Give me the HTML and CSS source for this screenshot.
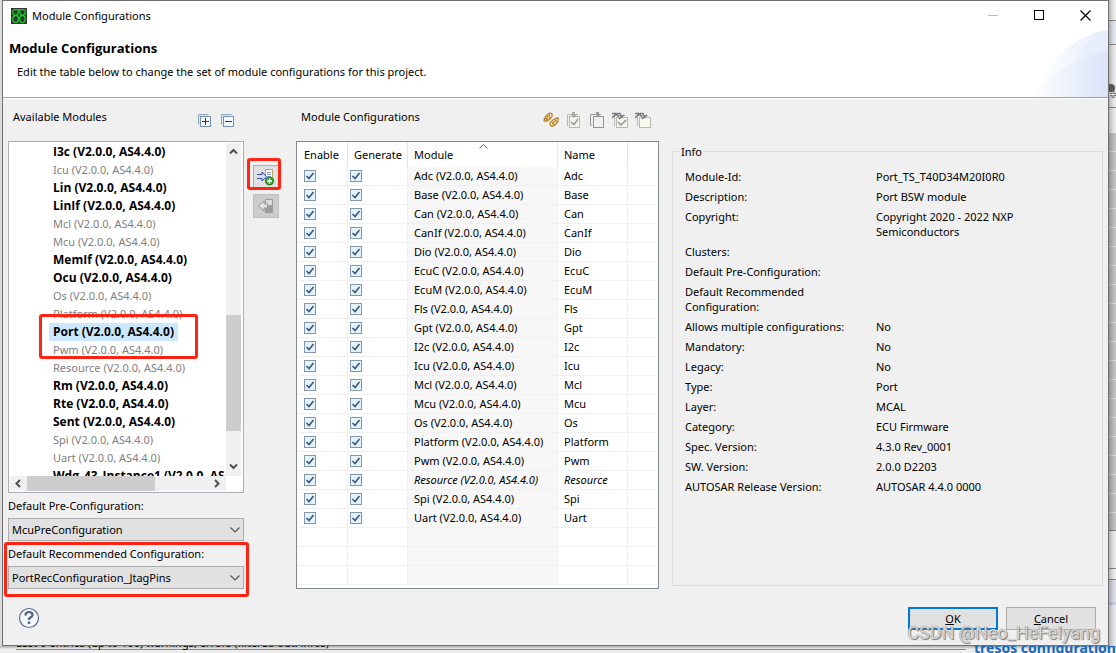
FILE: index.html
```html
<!DOCTYPE html>
<html lang="en">
<head>
<meta charset="utf-8">
<title>Module Configurations</title>
<link rel="stylesheet" href="styles.css">
</head>
<body>
<div class="edge edge-left"></div>
<main class="dialog">
  <header class="banner">
    <svg class="swoosh" width="78" height="67" viewBox="0 0 78 67" aria-hidden="true">
      <defs>
        <linearGradient id="g1" x1="0" x2="1"><stop offset="0" stop-color="#fff"/><stop offset="1" stop-color="#e6eefb"/></linearGradient>
        <linearGradient id="g2" x1="0" x2="1"><stop offset="0" stop-color="#fdfeff"/><stop offset="1" stop-color="#dbe3f8"/></linearGradient>
      </defs>
      <path d="M4 67C18 32 45 4 78 0V67Z" fill="url(#g1)"/>
      <path d="M44 33C52 16 64 4 78 0V67H44Z" fill="#e4edfb" opacity=".6"/>
      <path d="M4 67C20 44 48 26 78 21V67Z" fill="url(#g2)"/>
    </svg>
    <div class="titlebar">
      <svg width="16" height="16" viewBox="0 0 16 16" aria-hidden="true"><rect width="16" height="16" fill="#343434"/><path d="M7.300 4V1.700H4Q1.700 1.700 1.700 4.300T4.500 7.300Q1.700 8 1.700 11T4 14.300H5Q7.300 14.300 7.300 12V10Q7.300 7.500 4.500 7.300Q7.300 7 7.300 4ZM8.700 4V1.700H12Q14.300 1.700 14.300 4.300T11.500 7.300Q14.300 8 14.300 11T12 14.300H11Q8.700 14.300 8.700 12V10Q8.700 7.500 11.500 7.300Q8.700 7 8.700 4Z" fill="none" stroke="#10d820" stroke-width="1.200"/></svg>
      <span class="window-title">Module Configurations</span>
      <button class="win" aria-label="Minimize"><svg width="11" height="11"><path d="M0 5.500H10" stroke="#bbb"/></svg></button>
      <button class="win" aria-label="Maximize"><svg width="11" height="11"><rect x=".5" y=".5" width="9" height="9" fill="none" stroke="#000"/></svg></button>
      <button class="win" aria-label="Close"><svg width="11" height="11"><path d="M.5 .5L10.500 10.500M10.500 .5L.5 10.500" stroke="#000" stroke-width="1.200"/></svg></button>
    </div>
    <h1>Module Configurations</h1>
    <p>Edit the table below to change the set of module configurations for this project.</p>
  </header>

  <div class="content">
    <section class="available">
      <div class="bar">
        <h2>Available Modules</h2>
        <button class="tool" aria-label="Expand all"><svg width="14" height="14"><path d="M.5 10.500V.5H10.500" fill="none" stroke="#8fa9c4"/><path d="M1 10V1H10V3H3V10Z" fill="#d5e8f5"/><rect x="2.500" y="2.500" width="10" height="10" fill="#f4fbff" stroke="#7891b0"/><path d="M4 7.500H11M7.500 4V11" stroke="#08457c"/></svg></button>
        <button class="tool" aria-label="Collapse all"><svg width="14" height="14"><path d="M.5 10.500V.5H10.500" fill="none" stroke="#8fa9c4"/><path d="M1 10V1H10V3H3V10Z" fill="#d5e8f5"/><rect x="2.500" y="2.500" width="10" height="10" fill="#f4fbff" stroke="#7891b0"/><path d="M4 7.500H11" stroke="#08457c"/></svg></button>
      </div>
      <div class="tree">
        <ul>
          <li><span>I3c (V2.0.0, AS4.4.0)</span></li>
          <li class="used"><span>Icu (V2.0.0, AS4.4.0)</span></li>
          <li><span>Lin (V2.0.0, AS4.4.0)</span></li>
          <li><span>LinIf (V2.0.0, AS4.4.0)</span></li>
          <li class="used"><span>Mcl (V2.0.0, AS4.4.0)</span></li>
          <li class="used"><span>Mcu (V2.0.0, AS4.4.0)</span></li>
          <li><span>MemIf (V2.0.0, AS4.4.0)</span></li>
          <li><span>Ocu (V2.0.0, AS4.4.0)</span></li>
          <li class="used"><span>Os (V2.0.0, AS4.4.0)</span></li>
          <li class="used"><span>Platform (V2.0.0, AS4.4.0)</span></li>
          <li class="selected"><span>Port (V2.0.0, AS4.4.0)</span><i class="mark mark-port"></i></li>
          <li class="used"><span>Pwm (V2.0.0, AS4.4.0)</span></li>
          <li class="used"><span>Resource (V2.0.0, AS4.4.0)</span></li>
          <li><span>Rm (V2.0.0, AS4.4.0)</span></li>
          <li><span>Rte (V2.0.0, AS4.4.0)</span></li>
          <li><span>Sent (V2.0.0, AS4.4.0)</span></li>
          <li class="used"><span>Spi (V2.0.0, AS4.4.0)</span></li>
          <li class="used"><span>Uart (V2.0.0, AS4.4.0)</span></li>
          <li><span>Wdg_43_Instance1 (V2.0.0, AS4.4.0)</span></li>
        </ul>
        <div class="vscroll">
          <svg width="15" height="17"><path d="M4 10.500L7.500 7L11 10.500" fill="none" stroke="#505050" stroke-width="2"/></svg>
          <div class="vthumb"></div>
          <svg width="15" height="17"><path d="M4 5.500L7.500 9L11 5.500" fill="none" stroke="#505050" stroke-width="2"/></svg>
        </div>
        <div class="hscroll">
          <svg width="17" height="15"><path d="M10 4L6.500 7.500L10 11" fill="none" stroke="#505050" stroke-width="2"/></svg>
          <div class="hthumb"></div>
          <svg width="17" height="15"><path d="M6 4L9.500 7.500L6 11" fill="none" stroke="#505050" stroke-width="2"/></svg>
        </div>
      </div>
      <div class="field">
        <label for="pre">Default Pre-Configuration:</label>
        <div class="combo"><select id="pre"><option>McuPreConfiguration</option></select><svg width="10" height="6"><path d="M.5 .5L5 5L9.500 .5" fill="none" stroke="#555" stroke-width="1.200"/></svg></div>
      </div>
      <div class="field">
        <label for="rec">Default Recommended Configuration:</label>
        <div class="combo"><select id="rec"><option>PortRecConfiguration_JtagPins</option></select><svg width="10" height="6"><path d="M.5 .5L5 5L9.500 .5" fill="none" stroke="#555" stroke-width="1.200"/></svg></div>
        <i class="mark mark-rec"></i>
      </div>
    </section>

    <div class="transfer">
      <div class="marked">
        <button class="move" aria-label="Add module"><svg width="18" height="18"><rect x="8.500" y="1.500" width="7" height="12" fill="#fdfdf4" stroke="#b5a96c"/><path d="M10 4.500H14M10 6.500H14M10 8.500H14" stroke="#8a9bc8"/><path d="M0 6.500H5V4L9.500 8.500L5 13V10.500H0" fill="#d5def5" stroke="#3a4db0"/><circle cx="12.500" cy="13" r="4" fill="#38a82c" stroke="#1e7a18"/><path d="M10 13H15M12.500 10.500V15.500" stroke="#fff" stroke-width="1.500"/></svg></button>
        <i class="mark mark-add"></i>
      </div>
      <button class="move off" aria-label="Remove module" disabled><svg width="18" height="18"><rect x="8" y="2" width="8" height="14" fill="#9c9c9c"/><rect x="9" y="3" width="6" height="5" fill="#dadada"/><path d="M1.500 9L7 4V7H10.500V11H7V14Z" fill="#e2e2e2" stroke="#999"/></svg></button>
    </div>

    <section class="configured">
      <div class="bar">
        <h2>Module Configurations</h2>
        <button class="tool" aria-label="Link"><svg width="16" height="16" fill="none" stroke="#b9852a" stroke-width="1.300"><path d="M1 9Q1 6 4 3T9 2Q10 4 7 7T1 9ZM3 8L7 3M2 6L5 8M4 4L7 6M7 12Q7 10 10 8T15 6Q16 9 13 12T8 14ZM9 12L13 8M9 10L11 13M12 8L14 10"/><path d="M5 5L6 6M11 10L12 11" stroke="#f5d47c"/></svg></button>
        <button class="tool" aria-label="Enable all"><svg width="16" height="16"><path d="M1.500 14V2.500H12" fill="none" stroke="#b8b8ae"/><rect x="3.500" y="4.500" width="10" height="11" fill="#f5f5ee" stroke="#b8b8ae"/><path d="M5 10L8 12.500L12 7" fill="none" stroke="#999" stroke-width="1.600"/><path d="M6 0H9V3H11L8 6L5 3H6Z" fill="#aaa"/></svg></button>
        <button class="tool" aria-label="Disable all"><svg width="16" height="16"><path d="M2.500 13.500H1.500V2.500H12" fill="none" stroke="#949494"/><rect x="4.500" y="4.500" width="10" height="11" fill="#f0f0f0" stroke="#949494"/><path d="M7 0H10V2H12L9 5L6 2H7Z" fill="#999"/></svg></button>
        <button class="tool" aria-label="Generate all"><svg width="16" height="16"><path d="M2.500 14V3.500H13" fill="none" stroke="#b8b8ae"/><rect x="4.500" y="5.500" width="11" height="10" fill="#f5f5ee" stroke="#b8b8ae"/><path d="M6 10L9 13L14 8" fill="none" stroke="#999" stroke-width="1.600"/><path d="M0 1.500H4L7 5M0 6L4 2M5 1.500H8L10 6M7 7L12 3" fill="none" stroke="#777" stroke-width="1.500"/></svg></button>
        <button class="tool" aria-label="Generate none"><svg width="16" height="16"><path d="M2.500 14V3.500H13" fill="none" stroke="#b8b8ae"/><rect x="4.500" y="5.500" width="11" height="10" fill="#f8f8f0" stroke="#b8b8ae"/><path d="M0 1.500H4L7 5M0 6L4 2M5 1.500H8L10 6M7 7L12 3" fill="none" stroke="#777" stroke-width="1.500"/></svg></button>
      </div>
      <div class="grid">
        <table>
          <colgroup><col class="c-enable"><col class="c-generate"><col class="c-module"><col class="c-name"><col></colgroup>
          <thead><tr><th>Enable</th><th>Generate</th><th class="sort">Module<svg width="9" height="5"><path d="M.5 4.500L4.500 .5L8.500 4.500" fill="none" stroke="#666"/></svg></th><th>Name</th><th></th></tr></thead>
          <tbody id="rows"></tbody>
        </table>
      </div>
    </section>

    <fieldset class="info">
      <legend>Info</legend>
      <dl>
        <dt>Module-Id:</dt><dd>Port_TS_T40D34M20I0R0</dd>
        <dt>Description:</dt><dd>Port BSW module</dd>
        <dt>Copyright:</dt><dd>Copyright 2020 - 2022 NXP Semiconductors</dd>
        <dt>Clusters:</dt><dd></dd>
        <dt>Default Pre-Configuration:</dt><dd></dd>
        <dt>Default Recommended Configuration:</dt><dd></dd>
        <dt>Allows multiple configurations:</dt><dd>No</dd>
        <dt>Mandatory:</dt><dd>No</dd>
        <dt>Legacy:</dt><dd>No</dd>
        <dt>Type:</dt><dd>Port</dd>
        <dt>Layer:</dt><dd>MCAL</dd>
        <dt>Category:</dt><dd>ECU Firmware</dd>
        <dt>Spec. Version:</dt><dd>4.3.0 Rev_0001</dd>
        <dt>SW. Version:</dt><dd>2.0.0 D2203</dd>
        <dt>AUTOSAR Release Version:</dt><dd>AUTOSAR 4.4.0 0000</dd>
      </dl>
    </fieldset>
  </div>

  <footer>
    <button class="help" aria-label="Help"><svg width="22" height="22"><circle cx="11" cy="11" r="9.500" fill="#f5f7fa" stroke="#5b7193" stroke-width="1.200"/><path d="M7.500 8.500Q7.500 5 11 5T14.500 8Q14.500 9.500 12.500 10.500T11 13" fill="none" stroke="#4a6287" stroke-width="2.200"/><rect x="9.800" y="14.500" width="2.400" height="2.400" fill="#4a6287"/></svg></button>
    <button class="push primary"><u>O</u>K</button>
    <button class="push"><u>C</u>ancel</button>
  </footer>
</main>
<div class="edge edge-right"><svg width="7" height="16"><circle cx="2" cy="4" r="4" fill="#555"/><path d="M1 10.500H7M4 7V14" stroke="#777" stroke-width="3"/><path d="M1 10.500H7M4 8V13" stroke="#ddd"/></svg></div>
<div class="behind">
  <span class="problems">Last 0 entries (up to 100) warnings, errors (filtered out: infos)</span>
  <span class="link">tresos configuration</span>
</div>
<div class="watermark">CSDN @Neo_HeFeiyang</div>
<script src="rows.js"></script>
</body>
</html>
```
FILE: rows.js
```js
const modules = ["Adc", "Base", "Can", "CanIf", "Dio", "EcuC", "EcuM", "Fls", "Gpt", "I2c", "Icu", "Mcl", "Mcu", "Os", "Platform", "Pwm", "Resource", "Spi", "Uart"];
const check = (label) => `<input type="checkbox" checked aria-label="${label}">`;
const filled = modules.map((name) => `<tr${name === "Resource" ? ' class="locked"' : ""}><td>${check("Enable " + name)}</td><td>${check("Generate " + name)}</td><td>${name} (V2.0.0, AS4.4.0)</td><td>${name}</td><td></td></tr>`);
const blank = Array(3).fill("<tr><td></td><td></td><td></td><td></td><td></td></tr>");
document.getElementById("rows").innerHTML = filled.concat(blank).join("");
```
FILE: styles.css
```css
* { box-sizing: border-box; }
body {
  margin: 0;
  min-height: 100vh;
  display: grid;
  grid-template-columns: 2px 1fr 7px;
  grid-template-rows: 1fr 7px;
  position: relative;
  overflow: hidden;
  background: #e4e4ea;
  color: #000;
  font: 11px/15px "Noto Sans", "Open Sans", sans-serif;
}
button, select { font: inherit; color: inherit; }
button { padding: 0; border: 0; background: none; }
svg { display: block; flex: none; }
h1, h2, p, ul, dl, dd { margin: 0; padding: 0; }

.edge-left { background: #dcdce0; }
.edge-right {
  padding-top: 84px;
  overflow: hidden;
  background:
    linear-gradient(90deg, rgba(0,0,0,.25), rgba(0,0,0,.03) 5px),
    linear-gradient(#f4f4f4 20px, #8c8c8c 20px 21px, #e4ebf1 21px 44px, #8c8c8c 44px 45px, #efefef 45px 107px, #8c8c8c 107px 108px, #efefef 108px 133px, transparent 133px 530px, #808080 530px 531px, #eee 531px 568px, #888 568px 569px, #f2f2f2 569px 579px, #888 579px 580px, #e0e2ec 580px 602px, #c8cfe2 602px 605px, #ececf2 605px),
    repeating-linear-gradient(#c4c4c4 0 18px, #e0e0e0 18px 19px);
}
.behind {
  grid-column: 1 / -1;
  display: flex;
  justify-content: space-between;
  align-items: flex-end;
  overflow: hidden;
  background: linear-gradient(#bbb 1px, #eee 3px 7px);
}
.problems {
  flex: 1;
  margin: 0 8px 3px 16px;
  border-bottom: 1px solid #8c8c8c;
  line-height: 12px;
}
.link {
  width: 142px;
  height: 13px;
  color: #1769b8;
  font-size: 14px;
  font-weight: bold;
  white-space: nowrap;
}

.dialog {
  display: flex;
  flex-direction: column;
  border: 1px solid #707070;
  background: #f0f0f0;
  min-width: 0;
}
.banner {
  position: relative;
  height: 97px;
  background: #fff;
  border-bottom: 1px solid #a0a0a0;
}
.swoosh { position: absolute; right: 0; bottom: 0; }
.titlebar { display: flex; align-items: center; height: 29px; padding-left: 8px; }
.window-title { flex: 1; padding-left: 5px; }
.win { width: 46px; height: 28px; display: grid; place-items: center; }
h1 { padding: 8px 6px 0; font: bold 13px/20px "Open Sans", "Noto Sans", sans-serif; }
.banner p { padding: 6px 14px; }

.content {
  flex: 1;
  display: grid;
  grid-template-columns: 236px 35px 363px 1fr;
  border-top: 1px solid #fff;
  padding: 8px 5px 0;
}
.bar { display: flex; align-items: center; height: 34px; gap: 7px; }
.bar h2 { flex: 1; align-self: flex-start; padding: 2px 5px; font-size: 11px; font-weight: normal; }
.available .bar { gap: 9px; padding-right: 9px; }
.configured .bar { padding-right: 8px; }
.tool { padding-bottom: 8px; }
.available .tool { padding-bottom: 6px; }

.tree {
  display: grid;
  grid-template-columns: 1fr 15px;
  grid-template-rows: 333px 15px;
  padding: 1px 2px 1px 1px;
  border: 1px solid #abadb3;
  background: #fff;
}
.tree ul { padding-left: 39px; list-style: none; white-space: nowrap; min-width: 0; overflow: hidden; }
.tree li { height: 18px; font: bold 12px/18px "Open Sans", "Noto Sans", sans-serif; }
.tree li span { display: inline-block; padding: 0 4px; }
.tree .used { color: #808080; font: 11px/18px "Noto Sans", "Open Sans", sans-serif; }
.tree .selected { position: relative; }
.tree .selected span { background: #cce8ff; }
.vscroll, .hscroll { display: flex; background: #f0f0f0; }
.vscroll { flex-direction: column; justify-content: space-between; }
.vthumb { height: 116px; margin-top: auto; margin-bottom: 28px; background: #cdcdcd; }
.hscroll { justify-content: space-between; }
.hthumb { width: 128px; margin-right: auto; background: #cdcdcd; }

.field { position: relative; padding-top: 5px; }
.field label { display: block; height: 20px; }
.combo { display: grid; align-items: center; }
.combo select, .combo svg { grid-area: 1 / 1; }
.combo svg { justify-self: end; margin-right: 4px; pointer-events: none; }
.combo select {
  appearance: none;
  width: 100%;
  height: 23px;
  padding: 0 3px;
  border: 1px solid #adadad;
  border-radius: 0;
  background: #e1e1e1;
}

.mark { position: absolute; border: 3px solid #ff2413; border-radius: 3px; pointer-events: none; z-index: 1; }
.mark-port { left: -10px; top: -9px; width: 159px; height: 45px; }
.mark-rec { left: -4px; right: -5px; top: 1px; bottom: -8px; }
.mark-add { left: -6px; top: -7px; width: 34px; height: 32px; }

.transfer { padding-top: 58px; display: flex; flex-direction: column; gap: 5px; width: 26px; margin-left: 9px; }
.marked { position: relative; }
.move { display: grid; place-items: center; width: 26px; height: 24px; border: 1px solid #adadad; background: #e1e1e1; }
.move.off { border-color: #bfbfbf; background: #ccc; }

.configured { margin-left: 17px; width: 363px; }
.grid { padding: 0 1px 3px; border: 1px solid #828790; background: #fff; }
table { width: 100%; table-layout: fixed; border-collapse: separate; border-spacing: 0; }
.c-enable { width: 50px; }
.c-generate { width: 60px; }
.c-module { width: 150px; }
.c-name { width: 70px; }
th { height: 25px; padding: 0 6px; text-align: left; font-weight: normal; border-right: 1px solid #e5e5e5; }
td { height: 19px; padding: 0 6px; line-height: 18px; border-right: 1px solid #edf0f5; border-bottom: 1px solid #f0f0f0; }
th:last-child, td:last-child { border-right: 0; }
td:nth-child(3) { background: #f7f7f7; }
td:nth-child(2) { padding-left: 2px; }
.sort { position: relative; }
.sort svg { position: absolute; top: 2px; left: 71px; }
.locked { font-style: italic; }
input[type="checkbox"] {
  appearance: none;
  display: block;
  width: 12px;
  height: 12px;
  margin: 0;
  border: 1px solid #8496ac;
  background: #e3f3fc;
}
input:checked {
  background: #e3f3fc url("data:image/svg+xml,%3Csvg xmlns='http://www.w3.org/2000/svg' width='10' height='10'%3E%3Cpath d='M1.5 5L4 7.500L8.500 2' fill='none' stroke='%233d5578' stroke-width='1.600'/%3E%3C/svg%3E") center no-repeat;
}

.info { margin: 37px 0 3px 30px; padding: 0; border: 1px solid #dcdcdc; min-width: 0; }
.info legend { margin-left: 6px; padding: 0 2px; }
.info dl { display: grid; grid-template-columns: 176px 1fr; gap: 5px 15px; padding: 10px 18px 0 12px; }

footer { display: flex; align-items: flex-start; gap: 8px; padding: 18px 12px 15px 15px; }
.help { margin-right: auto; }
.push { width: 90px; height: 23px; border: 1px solid #adadad; background: #e1e1e1; }
.primary { border: 2px solid #0078d7; }

.watermark {
  position: absolute;
  right: 16px;
  bottom: 10px;
  color: rgba(225,225,225,.9);
  font: 18px/20px Roboto, "Liberation Sans", sans-serif;
  text-shadow: 1px 1px 1px #777, 0 0 1px #777;
}
```
